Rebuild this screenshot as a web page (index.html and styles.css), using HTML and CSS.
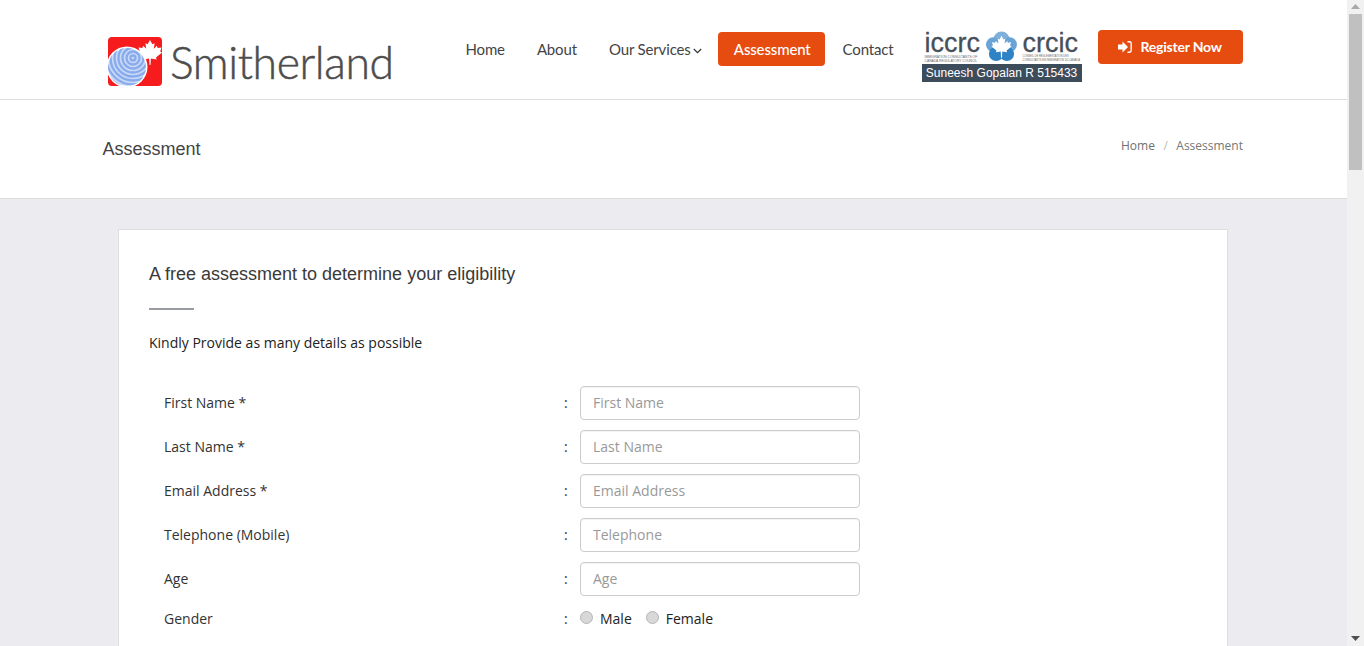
FILE: index.html
```html
<!DOCTYPE html>
<html lang="en">
<head>
<meta charset="utf-8">
<title>Assessment - Smitherland</title>
<link rel="stylesheet" href="styles.css">
</head>
<body>
<div class="page">
  <header class="topbar">
    <a class="logo" href="#">
      <svg class="logo-mark" width="56" height="52" viewBox="0 0 56 52">
        <defs><clipPath id="globe"><circle cx="20" cy="31" r="19"/></clipPath></defs>
        <rect x="1" y="1" width="54" height="49" rx="4" fill="#f61c1d"/>
        <path d="M43 4l2.400 4.300 2.200-1.100-.8 5.500 3-2.900.9 2.200 3.800-.6-1.300 4 1.800 1.100-6 4.900.7 2-5.800-.8-.4 6.500h-1l-.4-6.500-5.800.8.700-2-6-4.900 1.800-1.100-1.300-4 3.800.6.900-2.200 3 2.900-.8-5.500 2.200 1.100z" fill="#fff"/>
        <circle cx="20" cy="31" r="20.500" fill="#fff"/>
        <g clip-path="url(#globe)" fill="none" stroke="#88abec" stroke-width="2.300">
          <circle cx="20" cy="31" r="19" fill="#c9d9f7" stroke="none"/>
          <circle cx="26" cy="22" r="2.500"/>
          <circle cx="26" cy="22" r="6.500"/>
          <circle cx="26" cy="22" r="10.500"/>
          <circle cx="26" cy="22" r="14.500"/>
          <circle cx="26" cy="22" r="18.500"/>
          <circle cx="26" cy="22" r="22.500"/>
          <circle cx="26" cy="22" r="26.500"/>
          <circle cx="26" cy="22" r="30.500"/>
          <circle cx="26" cy="22" r="34.500"/>
        </g>
      </svg>
      <span class="logo-text">Smitherland</span>
    </a>
    <nav class="nav">
      <a class="nav-link" href="#">Home</a>
      <a class="nav-link" href="#">About</a>
      <a class="nav-link nav-services" href="#">Our Services
        <svg class="chev" width="9" height="6" viewBox="0 0 9 6"><path d="M.8 1l3.700 3.700L8.200 1" fill="none" stroke="#333" stroke-width="1.200"/></svg>
      </a>
      <a class="nav-active" href="#">Assessment</a>
      <a class="nav-link nav-contact" href="#">Contact</a>
    </nav>
    <div class="badge">
      <div class="badge-top">
        <div class="badge-side">
          <span class="badge-word">iccrc</span>
          <span class="badge-fine">IMMIGRATION CONSULTANTS OF<br>CANADA REGULATORY COUNCIL</span>
        </div>
        <svg class="badge-flower" width="31" height="31" viewBox="0 0 32 32">
          <circle cx="16" cy="9" r="8.500" fill="#7fb0dc"/>
          <circle cx="7.500" cy="14" r="7.500" fill="#6aa3d6"/>
          <circle cx="24.500" cy="14" r="7.500" fill="#6aa3d6"/>
          <circle cx="10.500" cy="23.500" r="7.500" fill="#2f83c5"/>
          <circle cx="21.500" cy="23.500" r="7.500" fill="#2f83c5"/>
          <path d="M16 5l2 3.900 1.900-.9-.7 4.800 2.700-2.500.7 1.900 3.300-.6-1.100 3.400 1.600.9-5.200 4.300.6 1.700-5-.7-.3 6.300h-1l-.3-6.300-5 .7.600-1.700-5.200-4.300 1.600-.9-1.100-3.400 3.300.6.700-1.900 2.700 2.500-.7-4.800 1.900.9z" fill="#fff"/>
        </svg>
        <div class="badge-side">
          <span class="badge-word">crcic</span>
          <span class="badge-fine badge-fine-small">CONSEIL DE RÉGLEMENTATION DES<br>CONSULTANTS EN IMMIGRATION DU CANADA</span>
        </div>
      </div>
      <div class="badge-name">Suneesh Gopalan R 515433</div>
    </div>
    <a class="register" href="#">
      <svg class="register-icon" width="14" height="12" viewBox="0 0 14 12">
        <path d="M0 3.500h4.500V.5L10 6l-5.500 5.500v-3H0z" fill="#fff"/>
        <path d="M9.500 .8h2c1 0 1.700.7 1.700 1.700v7c0 1-.7 1.700-1.700 1.700h-2" fill="none" stroke="#fff" stroke-width="1.400"/>
      </svg>
      Register Now
    </a>
  </header>

  <section class="titlebar">
    <h1 class="title">Assessment</h1>
    <div class="crumbs">
      <a class="crumb-link" href="#">Home</a>
      <span class="crumb-sep">/</span>
      <span class="crumb-current">Assessment</span>
    </div>
  </section>

  <main class="content">
    <div class="card">
      <h2 class="card-title">A free assessment to determine your eligibility</h2>
      <div class="rule"></div>
      <p class="lead">Kindly Provide as many details as possible</p>
      <form class="form">
        <label class="label" for="fn">First Name *</label><span class="colon">:</span>
        <input class="input" id="fn" type="text" placeholder="First Name">
        <label class="label" for="ln">Last Name *</label><span class="colon">:</span>
        <input class="input" id="ln" type="text" placeholder="Last Name">
        <label class="label" for="em">Email Address *</label><span class="colon">:</span>
        <input class="input" id="em" type="text" placeholder="Email Address">
        <label class="label" for="te">Telephone (Mobile)</label><span class="colon">:</span>
        <input class="input" id="te" type="text" placeholder="Telephone">
        <label class="label" for="ag">Age</label><span class="colon">:</span>
        <input class="input" id="ag" type="text" placeholder="Age">
        <span class="label">Gender</span><span class="colon">:</span>
        <div class="radios">
          <span class="radio"></span><span class="radio-label">Male</span>
          <span class="radio"></span><span class="radio-label">Female</span>
        </div>
      </form>
    </div>
  </main>
</div>
<div class="scrollbar">
  <svg class="arrow" width="9" height="5" viewBox="0 0 9 5"><path d="M4.500 0L9 5H0z" fill="#a8a8a8"/></svg>
  <div class="thumb"></div>
  <div class="track"></div>
  <svg class="arrow" width="9" height="5" viewBox="0 0 9 5"><path d="M0 0h9L4.500 5z" fill="#505050"/></svg>
</div>
</body>
</html>
```
FILE: styles.css
```css
* { box-sizing: border-box; }
html, body { margin: 0; height: 100%; }
body {
  display: flex;
  height: 646px;
  overflow: hidden;
  font-family: "Open Sans", sans-serif;
  font-size: 14px;
  color: #333;
  background: #ecebf0;
}
a { text-decoration: none; color: inherit; }
.page { flex: 1; min-width: 0; overflow: hidden; }

.topbar {
  height: 100px;
  background: #fff;
  border-bottom: 1px solid #ddd;
  display: flex;
  align-items: flex-start;
  padding-left: 107px;
  font-family: Lato, sans-serif;
}
.logo { display: flex; align-items: center; width: 328.500px; margin-top: 36px; height: 52px; }
.logo-mark { flex: none; }
.logo-text {
  font-family: Lato, sans-serif;
  font-weight: 300;
  font-size: 44.500px;
  letter-spacing: -.4px;
  color: #4d4d4d;
  -webkit-text-stroke: .5px #4d4d4d;
  margin-left: 7px;
  line-height: 52px;
}
.nav { display: flex; align-items: center; height: 34px; margin-top: 32px; margin-left: 14px; font-size: 15px; letter-spacing: -.15px; color: #444; }
.nav-link { padding: 0 16px; }
.nav-services { padding-right: 0; }
.chev { margin-left: -1px; vertical-align: 1px; }
.nav-active {
  background: #e64c10;
  color: #fff;
  border-radius: 4px;
  height: 34px;
  line-height: 35px;
  padding: 0 14px 0 15.500px;
  margin-left: 16px;
  font-weight: 500;
}
.nav-contact { padding: 0 0 0 18px; }

.badge { width: 160px; margin: 31px 0 0 28px; }
.badge-top { display: flex; justify-content: space-between; height: 33px; padding: 0 3px; }
.badge-side { display: flex; flex-direction: column; width: 56px; }
.badge-word { font-family: "Liberation Sans", sans-serif; font-size: 27px; line-height: 24px; height: 24px; color: #46505b; -webkit-text-stroke: .3px #46505b; }
.badge-fine { font-family: "Liberation Sans", sans-serif; font-size: 3.300px; line-height: 4px; color: #666; white-space: nowrap; }
.badge-fine-small { font-size: 2.600px; }
.badge-flower { flex: none; }
.badge-name {
  height: 18px;
  background: #3d4c5a;
  color: #fff;
  font-family: "Liberation Sans", sans-serif;
  font-size: 12px;
  line-height: 18px;
  text-align: center;
  white-space: nowrap;
}
.register {
  display: flex;
  align-items: center;
  justify-content: center;
  gap: 8px;
  width: 145px;
  height: 34px;
  padding-bottom: 1px;
  margin: 30px 0 0 16px;
  background: #e64c10;
  color: #fff;
  border-radius: 4px;
  font-size: 14px;
  font-weight: 700;
  letter-spacing: -.2px;
}
.register-icon { flex: none; }

.titlebar {
  height: 99px;
  background: #fff;
  border-bottom: 1px solid #ddd;
  display: flex;
  align-items: center;
  justify-content: space-between;
  padding: 0 104px 0 102.500px;
}
.title { margin: 0; font-family: "Liberation Sans", sans-serif; font-size: 18px; font-weight: 400; color: #444; }
.crumbs { display: flex; gap: 8.500px; margin-top: -8px; font-size: 12px; color: #777; }
.crumb-link { color: #6f6f6f; }
.crumb-sep { color: #bbb; }
.crumb-current { color: #777; }

.content { padding: 30px 119px 0 118px; }
.card {
  background: #fff;
  border: 1px solid #dedee2;
  border-bottom: 0;
  padding: 34px 30px 0;
  height: 600px;
}
.card-title { margin: 0; font-family: "Liberation Sans", sans-serif; font-size: 18px; line-height: 20px; font-weight: 400; color: #3a3a3a; }
.rule { width: 45px; height: 2px; background: #9a9ca4; margin-top: 24px; }
.lead { margin: 23px 0 0; line-height: 19px; color: #222; }

.form {
  display: grid;
  grid-template-columns: 400px 16px 280px;
  row-gap: 10px;
  align-items: center;
  padding-left: 15px;
  margin-top: 34px;
}
.label { color: #333; padding-bottom: 2px; }
.colon { color: #333; padding-bottom: 2px; }
.input {
  width: 280px;
  height: 34px;
  padding: 0 12px 2px;
  border: 1px solid #ccc;
  border-radius: 4px;
  font: 14px "Open Sans", sans-serif;
  color: #333;
  background: #fff;
  box-shadow: inset 0 1px 1px rgba(0,0,0,.05);
}
.input::placeholder { color: #999; opacity: 1; }
.radios { display: flex; align-items: center; height: 26px; padding-bottom: 2px; }
.radio {
  width: 13px;
  height: 13px;
  margin-top: -1px;
  border-radius: 50%;
  border: 1px solid #b5b5b5;
  background: #d8d8d8;
}
.radio-label { margin: 0 14px 0 7px; color: #222; }

.scrollbar {
  flex: none;
  width: 17px;
  height: 646px;
  background: #f1f1f1;
  display: flex;
  flex-direction: column;
  align-items: center;
}
.arrow { flex: none; margin: 4px 0 5px; }
.thumb { flex: none; width: 13px; height: 156px; background: #c0c0c0; margin-left: -1px; }
.track { flex: 1; }
```
